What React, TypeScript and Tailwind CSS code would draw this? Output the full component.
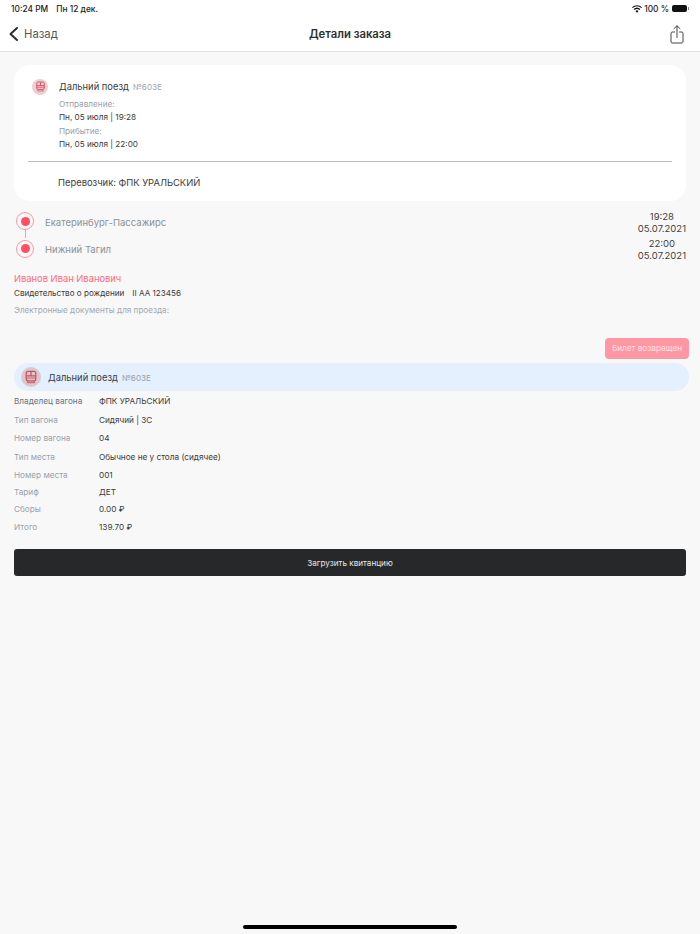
import React from "react";

function TrainIcon({ size, className }: { size: number; className?: string }) {
  return (
    <svg width={size} height={size} viewBox="0 0 16 16" fill="none" stroke="currentColor" strokeWidth="1.4" className={className}>
      <rect x="2.5" y="1.5" width="11" height="10.8" rx="2.2" />
      <path d="M2.5 6.8h11M8 1.8v5" />
      <path d="M2.5 9.2h11" strokeWidth="1" />
      <path d="M4.8 12.4 3.8 14.5h8.4l-1-2.1" strokeWidth="1.1" />
    </svg>
  );
}

function Dot() {
  return (
    <div className="w-[18px] h-[18px] rounded-full border border-[#ff98a5] flex items-center justify-center bg-[#f8f8f8] shrink-0">
      <div className="w-[9px] h-[9px] rounded-full bg-[#ff4f64]" />
    </div>
  );
}

const rows: { label: string; value: string; h: string; dark?: boolean }[] = [
  { label: "Владелец вагона", value: "ФПК УРАЛЬСКИЙ", h: "h-[19px]", dark: true },
  { label: "Тип вагона", value: "Сидячий | 3С", h: "h-[19px]" },
  { label: "Номер вагона", value: "04", h: "h-[17px]" },
  { label: "Тип места", value: "Обычное не у стола (сидячее)", h: "h-[20px]" },
  { label: "Номер места", value: "001", h: "h-[17px]" },
  { label: "Тариф", value: "ДЕТ", h: "h-[17px]" },
  { label: "Сборы", value: "0.00 ₽", h: "h-[16px]" },
  { label: "Итого", value: "139.70 ₽", h: "h-[21px]" },
];

export default function App() {
  return (
    <div className="relative w-[700px] h-[934px] overflow-hidden bg-[#f8f8f8] text-[#3a3b3d] font-['Inter','Liberation_Sans',sans-serif]">
      <header className="bg-white h-[52px] border-b border-[#e3e3e3]">
        <div className="h-[17px] pt-[1px] flex items-center justify-between pl-[11px] pr-[11px] text-[8.4px] text-[#222] font-medium">
          <div className="flex gap-[8px]">
            <span>10:24 PM</span>
            <span>Пн 12 дек.</span>
          </div>
          <div className="flex items-center gap-[2px]">
            <svg width="10" height="8" viewBox="0 0 22 16" fill="#111">
              <path d="M11 16 7.6 12.3a5 5 0 0 1 6.8 0Z" />
              <path d="M5.6 10.2 3.5 8a11 11 0 0 1 15 0l-2.1 2.2a8 8 0 0 0-10.8 0Z" />
              <path d="M1.6 5.9 0 4.2a16 16 0 0 1 22 0l-1.6 1.7a13.6 13.6 0 0 0-18.8 0Z" />
            </svg>
            <span>100 %</span>
            <div className="flex items-center ml-[1px]">
              <div className="w-[15px] h-[7px] rounded-[2px] bg-[#111]" />
              <div className="w-[1px] h-[3px] bg-[#888] ml-[1px]" />
            </div>
          </div>
        </div>
        <div className="relative h-[34px] flex items-center justify-between pl-[8px] pr-[16px]">
          <div className="flex items-center gap-[5px] text-[#55575a]">
            <svg width="11" height="16" viewBox="0 0 11 16" fill="none" stroke="#2b2b2b" strokeWidth="2" strokeLinecap="round" strokeLinejoin="round">
              <path d="M9 2 2.5 8 9 14" />
            </svg>
            <span className="text-[11.3px]">Назад</span>
          </div>
          <span className="absolute left-0 right-0 text-center text-[11.3px] font-semibold text-[#2e2f31]">Детали заказа</span>
          <svg width="14" height="19" viewBox="0 0 14 19" fill="none" stroke="#444" strokeWidth="1" strokeLinecap="round" strokeLinejoin="round">
            <path d="M4.5 7H2a1.5 1.5 0 0 0-1 1v9a1.5 1.5 0 0 0 1 1h10a1.5 1.5 0 0 0 1-1V8a1.5 1.5 0 0 0-1-1H9.5" />
            <path d="M7 12.5V1M4 3.6 7 .8l3 2.8" />
          </svg>
        </div>
      </header>

      <main className="px-[14px] pt-[13px]">
        <section className="bg-white rounded-[16px] h-[136px] px-[14px] pt-[13px]">
          <div className="flex items-center pl-[4px] h-[17px]">
            <div className="w-[16px] h-[16px] rounded-full bg-[#eccfd2] flex items-center justify-center text-[#d8505f]">
              <TrainIcon size={11} />
            </div>
            <span className="ml-[11px] mt-[1px] text-[9.4px] text-[#3a3b3d]">Дальний поезд</span>
            <span className="ml-[4px] mt-[1px] text-[8.15px] text-[#a0a8b2]">№603Е</span>
          </div>
          <div className="pl-[31px] mt-[3px] text-[8.2px] leading-[13.3px]">
            <div className="text-[#98a1ab] h-[13.3px]">Отправление:</div>
            <div className="text-[#3a3b3d]">Пн, 05 июля | 19:28</div>
            <div className="text-[#98a1ab]">Прибытие:</div>
            <div className="text-[#3a3b3d]">Пн, 05 июля | 22:00</div>
          </div>
          <div className="h-px bg-[#b9bdc3] mt-[10px]" />
          <div className="pl-[30px] mt-[14px] text-[9.4px] text-[#3a3b3d]">Перевозчик: ФПК УРАЛЬСКИЙ</div>
        </section>

        <section className="mt-[6px]">
          <div className="flex items-center justify-between h-[28px] relative">
            <div className="flex items-center pl-[2px]">
              <Dot />
              <span className="ml-[11px] mt-[4px] text-[9.5px] text-[#8a9199]">Екатеринбург-Пассажирс</span>
            </div>
            <div className="mt-[3px] text-center text-[9.5px] leading-[11.5px] text-[#3e3f41]">
              <div>19:28</div>
              <div>05.07.2021</div>
            </div>
            <div className="absolute left-[10.5px] top-[22px] w-[1.5px] h-[9px] bg-[#ff98a5]" />
          </div>
          <div className="flex items-center justify-between h-[27px]">
            <div className="flex items-center pl-[2px]">
              <Dot />
              <span className="ml-[11px] mt-[3px] text-[9.5px] text-[#8a9199]">Нижний Тагил</span>
            </div>
            <div className="mt-[2px] text-center text-[9.5px] leading-[11.5px] text-[#3e3f41]">
              <div>22:00</div>
              <div>05.07.2021</div>
            </div>
          </div>
        </section>

        <section className="mt-[10px]">
          <div className="text-[9.35px] leading-[14px] text-[#ff6b7c]">Иванов Иван Иванович</div>
          <div className="flex gap-[8px] text-[8.1px] leading-[14px] text-[#3a3b3d]">
            <span>Свидетельство о рождении</span>
            <span>II АА 123456</span>
          </div>
          <div className="mt-[3px] text-[8.15px] leading-[14px] text-[#a0a8b2]">Электронные документы для проезда:</div>
        </section>

        <div className="flex justify-end mt-[21px] -mr-[3px]">
          <div className="w-[84px] h-[21px] rounded-[4px] bg-[#ff96a3] text-[#ffe3e6] text-[8.2px] flex items-center justify-center">Билет возвращен</div>
        </div>

        <div className="mt-[4px] h-[28px] rounded-[14px] bg-[#e4f0fd] flex items-center pl-[7px] w-[675px]">
          <div className="w-[20px] h-[20px] rounded-full bg-[#dcc8cc] flex items-center justify-center text-[#c9505e]">
            <TrainIcon size={14} />
          </div>
          <span className="ml-[7px] mt-[2px] text-[9.4px] text-[#3a3b3d]">Дальний поезд</span>
          <span className="ml-[4px] mt-[2px] text-[8.15px] text-[#98a1ab]">№603Е</span>
        </div>

        <div className="pt-[1px]">
          {rows.map((r) => (
            <div key={r.label} className={`flex items-center text-[8.2px] ${r.h}`}>
              <span className={`w-[85px] ${r.dark ? "text-[#6b7078]" : "text-[#98a1ab]"}`}>{r.label}</span>
              <span className="text-[#3a3b3d]">{r.value}</span>
            </div>
          ))}
        </div>

        <div className="mt-[11px] pt-[1px] h-[27px] rounded-[3px] bg-[#27282a] text-[#e8e8e8] text-[8.15px] flex items-center justify-center">
          Загрузить квитанцию
        </div>
      </main>

      <div className="absolute bottom-[5px] left-[243px] w-[214px] h-[4px] rounded-full bg-black" />
    </div>
  );
}
